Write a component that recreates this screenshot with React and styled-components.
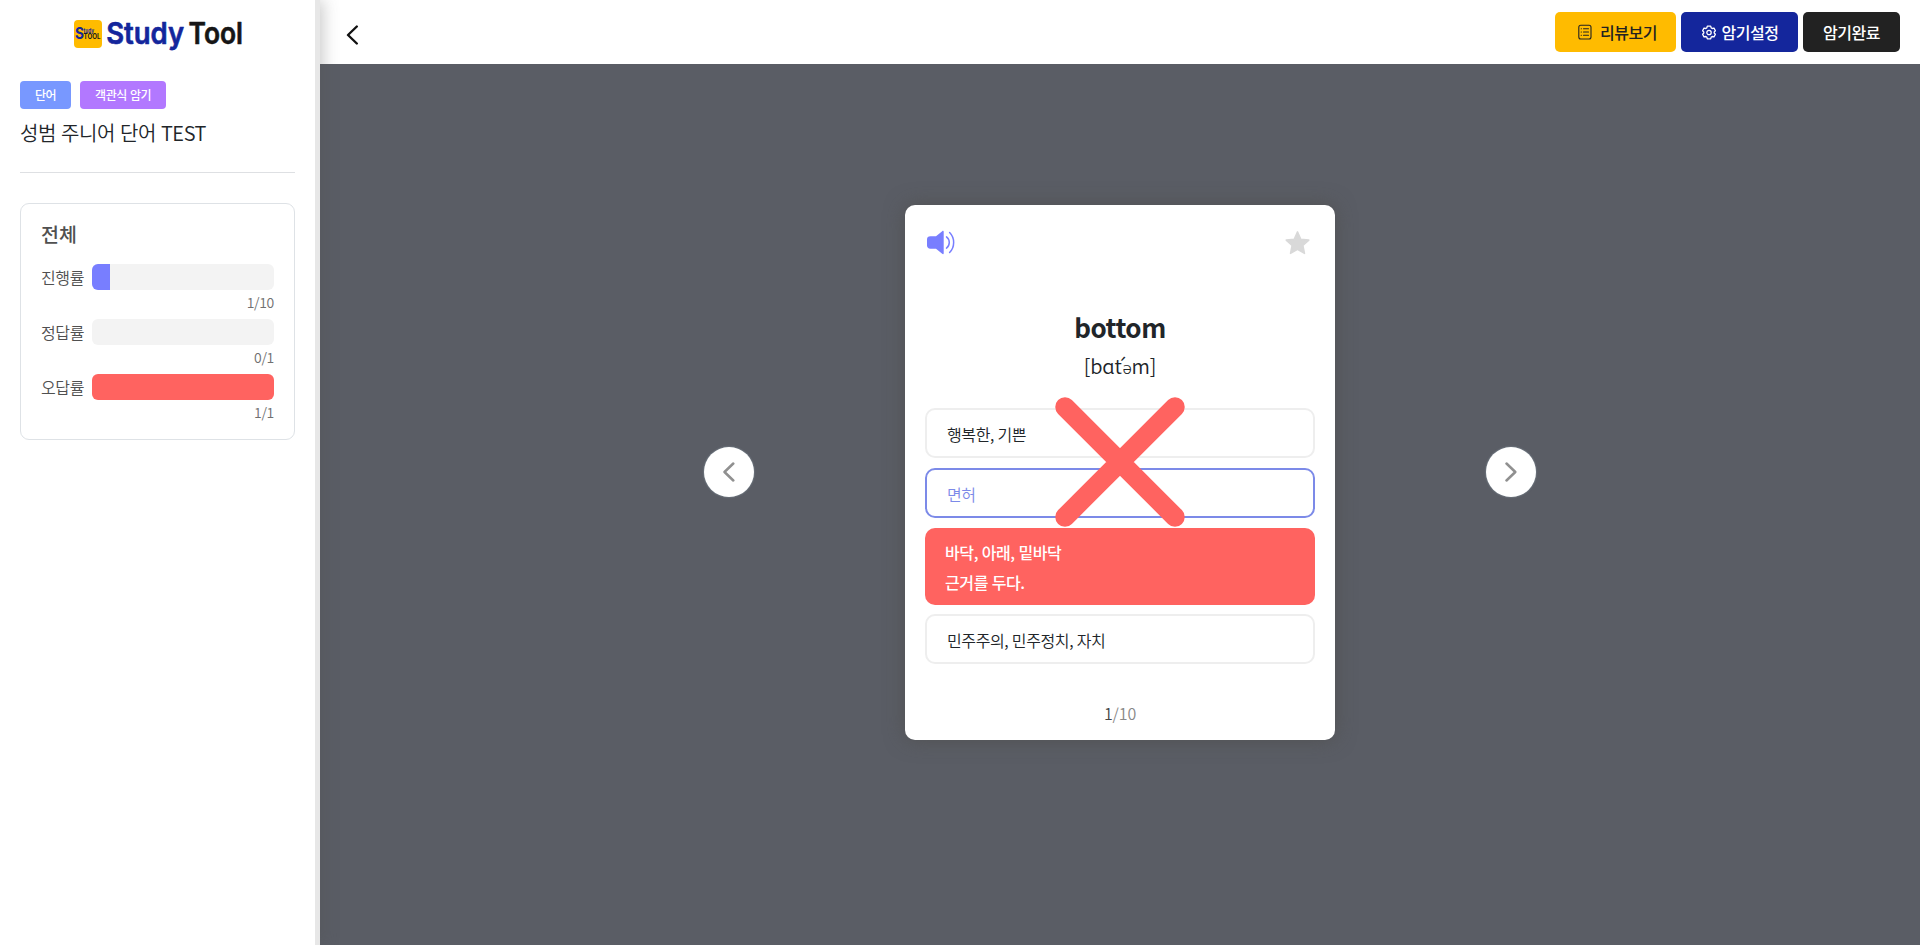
import React from "react";
import styled, { createGlobalStyle, css } from "styled-components";

const GlobalStyle = createGlobalStyle`
  *, *::before, *::after { box-sizing: border-box; }
  body {
    margin: 0;
    color: #212529;
    font-family: "Noto Sans CJK KR", "Noto Sans", sans-serif;
    font-size: 16px;
    line-height: 1.5;
    overflow: hidden;
  }
  button { font: inherit; border: 0; padding: 0; cursor: pointer; }
  svg { display: block; flex: none; }
`;

const Page = styled.div`
  display: flex;
  height: 100vh;
`;

const Sidebar = styled.aside`
  position: relative;
  z-index: 2;
  flex: none;
  width: 320px;
  padding: 14px 20px 0;
  background: #fff;
  border-right: 5px solid #e7e7e7;
  box-shadow: 3px 0 15px rgba(80, 80, 80, 0.3);
`;

const Logo = styled.div`
  display: flex;
  align-items: center;
  height: 40px;
  padding-left: 54px;
`;

const Tags = styled.div`
  display: flex;
  gap: 9px;
  margin-top: 27px;
`;

const Tag = styled.span`
  height: 28px;
  padding: 0 15px;
  border-radius: 4px;
  background: ${(p) => p.$color};
  color: #fff;
  font-size: 12px;
  font-weight: 500;
  line-height: 28px;
  letter-spacing: -0.5px;
  word-spacing: 1px;
`;

const TestTitle = styled.h1`
  margin: 9px 0 0;
  font-size: 20px;
  font-weight: 350;
  line-height: 30px;
  letter-spacing: -0.4px;
  word-spacing: 0.9px;
`;

const Divider = styled.hr`
  height: 1px;
  margin: 24px 0 30px;
  border: 0;
  background: #dee0e3;
`;

const StatsCard = styled.section`
  height: 237px;
  padding: 15px 20px 0;
  border: 1px solid #dee2e6;
  border-radius: 9px;
  color: #505050;
`;

const StatsTitle = styled.h2`
  margin: 0 0 15px;
  font-size: 19.5px;
  font-weight: 500;
  line-height: 30px;
`;

const StatRow = styled.div`
  display: grid;
  grid-template-columns: 51px 1fr;
  grid-template-rows: 26px 29px;
  align-items: center;
  height: 55px;
`;

const StatLabel = styled.span`
  font-size: 16px;
  font-weight: 350;
  line-height: 26px;
  letter-spacing: -0.4px;
`;

const Track = styled.div`
  height: 26px;
  border-radius: 6px;
  background: #f3f3f3;
  overflow: hidden;
`;

const Fill = styled.div`
  height: 100%;
  background: ${(p) => p.$color};
`;

const StatValue = styled.span`
  grid-column: 2;
  align-self: start;
  color: #707070;
  font-size: 14px;
  font-weight: 350;
  line-height: 24px;
  letter-spacing: -0.3px;
  text-align: right;
`;

const Content = styled.div`
  display: flex;
  flex: 1;
  flex-direction: column;
`;

const Header = styled.header`
  display: flex;
  flex: none;
  align-items: center;
  justify-content: space-between;
  height: 64px;
  padding: 0 20px 0 25.5px;
  background: #fff;
`;

const BackButton = styled.button`
  background: none;
  margin-top: 6px;
`;

const Actions = styled.div`
  display: flex;
  gap: 5px;
`;

const ActionButton = styled.button`
  display: flex;
  align-items: center;
  justify-content: center;
  gap: ${(p) => p.$gap || 0}px;
  width: ${(p) => p.$width}px;
  height: 40px;
  padding-left: ${(p) => p.$inset || 0}px;
  border-radius: 5px;
  background: ${(p) => p.$bg};
  color: ${(p) => p.$fg};
  font-size: 16px;
  font-weight: 500;
  letter-spacing: -0.5px;
`;

const Stage = styled.main`
  display: flex;
  flex: 1;
  align-items: center;
  justify-content: center;
  gap: 151px;
  padding-bottom: 64px;
  background: #5a5d65;
`;

const NavButton = styled.button`
  display: flex;
  align-items: center;
  justify-content: center;
  width: 50px;
  height: 50px;
  margin-bottom: 1px;
  border-radius: 50%;
  background: #fff;
  box-shadow: 0 0 2px rgba(200, 225, 240, 0.5);
`;

const WordCard = styled.article`
  display: flex;
  flex-direction: column;
  width: 430px;
  height: 535px;
  padding: 25px 20px 0;
  border-radius: 10px;
  background: #fff;
  box-shadow: 0 0 20px rgba(80, 80, 80, 0.9);
`;

const CardTools = styled.div`
  display: flex;
  justify-content: space-between;
  height: 26px;
  padding: 0 5px 0 2px;
`;

const Word = styled.h2`
  margin: 50px 0 0;
  font-size: 26px;
  font-weight: 600;
  line-height: 42px;
  letter-spacing: -0.5px;
  text-align: center;
`;

const Pronunciation = styled.p`
  margin: 3px 0 0;
  font-size: 20px;
  font-weight: 350;
  line-height: 30px;
  letter-spacing: -0.2px;
  text-align: center;
`;

const Stressed = styled.span`
  letter-spacing: -5.8px;
`;

const Schwa = styled.span`
  font-family: "Noto Sans", sans-serif;
  font-size: 17px;
  line-height: 1;
`;

const Options = styled.div`
  position: relative;
  display: flex;
  flex-direction: column;
  gap: 9.8px;
  margin-top: 27.4px;
`;

const Option = styled.div`
  height: 50px;
  padding: 0 20px;
  border: 2px solid #eee;
  border-radius: 10px;
  font-size: 16px;
  font-weight: 350;
  line-height: 48px;
  letter-spacing: -0.4px;
  word-spacing: 0.5px;
  ${(p) =>
    p.$state === "answer" &&
    css`
      border-color: #7c8ae8;
      color: #7c8ae8;
    `}
  ${(p) =>
    p.$state === "wrong" &&
    css`
      height: 76.6px;
      padding: 9px 20px 0;
      border: 0;
      background: #ff6360;
      color: #fff;
      font-weight: 500;
      line-height: 30px;
    `}
`;

const WrongMark = styled.svg`
  position: absolute;
  top: -11.2px;
  left: 130px;
`;

const Pager = styled.div`
  margin-top: 35.4px;
  color: #888;
  font-size: 16px;
  font-weight: 350;
  line-height: 26px;
  letter-spacing: -0.1px;
  text-align: center;
`;

const PagerCurrent = styled.span`
  color: #444;
`;

const LogoMark = () => (
  <svg width="28" height="28" viewBox="0 0 28 28">
    <rect width="28" height="28" rx="4" fill="#ffbb00" />
    <g fontFamily="Inter, sans-serif" fontWeight="700">
      <text x="1" y="19" fontSize="16" fill="#14269c" textLength="9" lengthAdjust="spacingAndGlyphs">S</text>
      <text x="9.5" y="12.8" fontSize="5.5" fill="#14269c" textLength="10.5" lengthAdjust="spacingAndGlyphs">tudy</text>
      <text x="9.5" y="19" fontSize="7" fill="#1c1c1c" textLength="17" lengthAdjust="spacingAndGlyphs">TOOL</text>
    </g>
  </svg>
);

const LogoType = () => (
  <svg width="160" height="40" viewBox="0 0 160 40" fontFamily="Inter, sans-serif" fontWeight="600" fontSize="30" strokeWidth=".6" strokeLinejoin="round">
    <text x="4.200" y="30" fill="#14269c" stroke="#14269c" textLength="78" lengthAdjust="spacingAndGlyphs">Study</text>
    <text x="86.500" y="30" fill="#161616" stroke="#161616" textLength="54.500" lengthAdjust="spacingAndGlyphs">Tool</text>
  </svg>
);

const Chevron = ({ width, height, stroke, weight, right }) => (
  <svg width={width} height={height} viewBox="0 0 12 20" fill="none" stroke={stroke} strokeWidth={weight} strokeLinecap="round" strokeLinejoin="round">
    <path d={right ? "M1.500 1.500 10.300 10 1.500 18.500" : "M10.300 1.500 1.500 10l8.800 8.500"} />
  </svg>
);

const ListIcon = () => (
  <svg width="14" height="16" viewBox="0 0 14 16" fill="none" stroke="currentColor" strokeWidth="1.1" strokeLinecap="round">
    <rect x=".8" y="1.200" width="12.200" height="13.800" rx="2" />
    <path d="M5.500 4.700h5M5.500 8h5M5.500 11.300h5M3.200 4.700h.2M3.200 8h.2M3.200 11.300h.2" />
  </svg>
);

const GearIcon = () => (
  <svg width="14" height="15" viewBox="0 0 14 15" fill="none" stroke="currentColor" strokeWidth="1.3" strokeLinejoin="round">
    <path d="M5.3 1.2h3.4l.5 1.7 1 .6 1.8-.4 1.4 2.7-1.2 1.1v1.2l1.2 1.1-1.4 2.7-1.8-.4-1 .6-.5 1.7H5.3l-.5-1.7-1-.6-1.8.4L.6 9.2l1.2-1.1V6.9L.6 5.8 2 3.1l1.8.4 1-.6z" />
    <circle cx="7" cy="7.5" r="2.2" />
  </svg>
);

const SpeakerIcon = () => (
  <svg width="28" height="25" viewBox="0 -.5 28 25">
    <path d="M16.7 1.2v21.6c0 1-.8 1.1-1.5.5L9 18.2H3.4C1.300 18.200 0 17 0 15V9c0-2 1.300-3.200 3.400-3.200H9L15.200.7c.7-.6 1.500-.5 1.500.5z" fill="#787eff" />
    <g fill="none" stroke="#787eff" strokeWidth="1.500" strokeLinecap="round">
      <path d="M19.500 6.400c3.700 2.900 3.700 8.300 0 11.200" />
      <path d="M22.600 2c5.400 5.300 5.400 14.700 0 20" />
    </g>
  </svg>
);

const StarIcon = () => (
  <svg width="26" height="26" viewBox="0 0 26 26">
    <path d="m13.500 1.900 3.300 7.300 8 .9-5.900 5.400 1.600 7.900-7-4-7 4 1.600-7.900-5.900-5.400 8-.9z" fill="#d9d9d9" stroke="#d9d9d9" strokeWidth="1.500" strokeLinejoin="round" />
  </svg>
);

const STATS = [
  { label: "진행률", value: "1/10", percent: 10, color: "#787eff" },
  { label: "정답률", value: "0/1", percent: 0, color: "#787eff" },
  { label: "오답률", value: "1/1", percent: 100, color: "#ff6360" },
];

const OPTIONS = [
  { lines: ["행복한, 기쁜"] },
  { lines: ["면허"], state: "answer" },
  { lines: ["바닥, 아래, 밑바닥", "근거를 두다."], state: "wrong" },
  { lines: ["민주주의, 민주정치, 자치"] },
];

export default function App() {
  return (
    <Page>
      <GlobalStyle />
      <Sidebar>
        <Logo>
          <LogoMark />
          <LogoType />
        </Logo>
        <Tags>
          <Tag $color="#7898ff">단어</Tag>
          <Tag $color="#b278ff">객관식 암기</Tag>
        </Tags>
        <TestTitle>성범 주니어 단어 TEST</TestTitle>
        <Divider />
        <StatsCard>
          <StatsTitle>전체</StatsTitle>
          {STATS.map((s) => (
            <StatRow key={s.label}>
              <StatLabel>{s.label}</StatLabel>
              <Track>
                <Fill $color={s.color} style={{ width: `${s.percent}%` }} />
              </Track>
              <StatValue>{s.value}</StatValue>
            </StatRow>
          ))}
        </StatsCard>
      </Sidebar>
      <Content>
        <Header>
          <BackButton>
            <Chevron width={13} height={20} stroke="#111" weight={2.4} />
          </BackButton>
          <Actions>
            <ActionButton $width={121} $gap={8} $inset={4} $bg="#ffbb00" $fg="#222">
              <ListIcon />
              리뷰보기
            </ActionButton>
            <ActionButton $width={117} $gap={6} $inset={1} $bg="#14269c" $fg="#fff">
              <GearIcon />
              암기설정
            </ActionButton>
            <ActionButton $width={97} $bg="#222" $fg="#fff">암기완료</ActionButton>
          </Actions>
        </Header>
        <Stage>
          <NavButton>
            <Chevron width={12} height={20} stroke="#909090" weight={2.5} />
          </NavButton>
          <WordCard>
            <CardTools>
              <SpeakerIcon />
              <StarIcon />
            </CardTools>
            <Word>bottom</Word>
            <Pronunciation>
              [bɑ<Stressed>t´</Stressed>
              <Schwa>ə</Schwa>m]
            </Pronunciation>
            <Options>
              {OPTIONS.map((o) => (
                <Option key={o.lines[0]} $state={o.state}>
                  {o.lines.map((line) => (
                    <div key={line}>{line}</div>
                  ))}
                </Option>
              ))}
              <WrongMark width="130" height="130" viewBox="0 0 130 130">
                <path d="M10 10l110 110M120 10 10 120" stroke="#ff6360" strokeWidth="19.500" strokeLinecap="round" />
              </WrongMark>
            </Options>
            <Pager>
              <PagerCurrent>1</PagerCurrent>/10
            </Pager>
          </WordCard>
          <NavButton>
            <Chevron width={12} height={20} stroke="#909090" weight={2.5} right />
          </NavButton>
        </Stage>
      </Content>
    </Page>
  );
}
